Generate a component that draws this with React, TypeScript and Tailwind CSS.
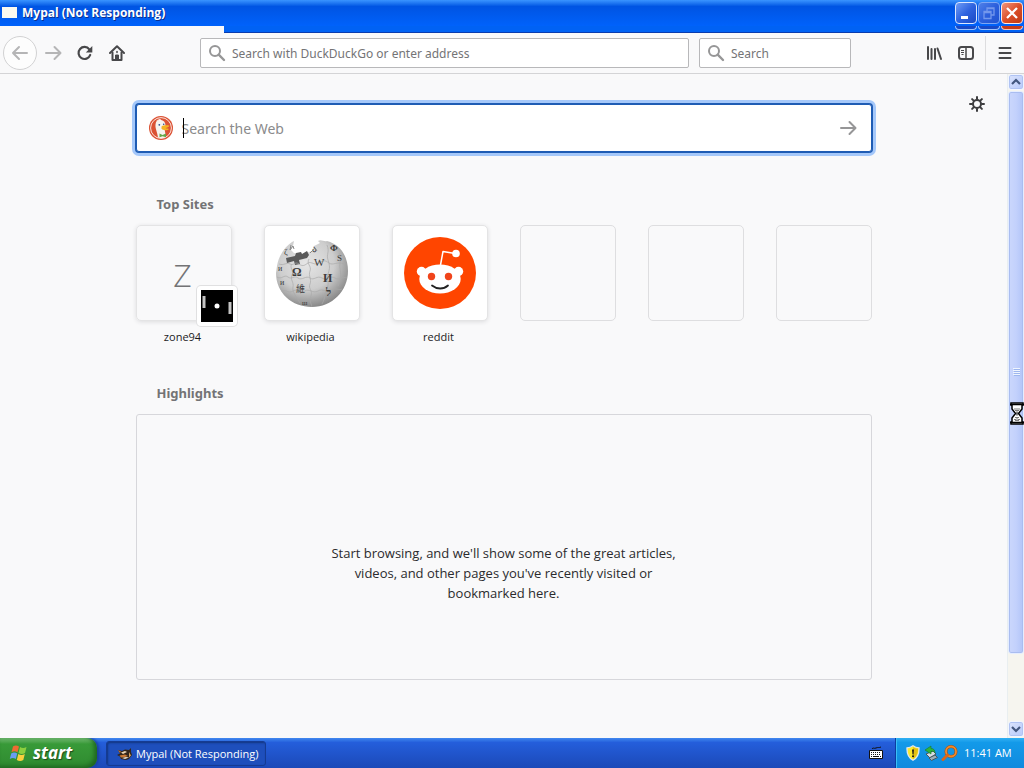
import type { ReactNode } from 'react';

const ui = "font-['Noto_Sans','Open_Sans',sans-serif]";

function WindowButton({ label, tone, children }: { label: string; tone: 'blue' | 'dim' | 'red'; children: ReactNode }) {
  const tones = {
    blue: 'bg-linear-to-br from-[#6f9bf5] via-[#2f63df] to-[#1b49c4] border-[#dbe7ff]',
    dim: 'bg-linear-to-br from-[#4f7fe8] via-[#2c5fdc] to-[#2153d0] border-[#7ea6f3]',
    red: 'bg-linear-to-br from-[#f0937a] via-[#dc4f28] to-[#c03a14] border-[#ffe9e2]',
  };
  const edges = {
    blue: 'border-[#9cc0fb] bg-[#1748c6]',
    dim: 'border-[#9cc0fb] bg-[#1748c6]',
    red: 'border-[#f3c3bd] bg-[#c43b1b]',
  };
  return (
    <div className="w-[22px]">
      <button aria-label={label} className={`flex h-[22px] w-full items-center justify-center rounded-[4px] border ${tones[tone]}`}>
        {children}
      </button>
      <div className={`mt-[2px] h-[4px] rounded-b-[4px] border border-t-0 ${edges[tone]}`} />
    </div>
  );
}

function TitleBar() {
  return (
    <header className="relative h-[33px] shrink-0 bg-[#0058f0]">
      <div className="flex h-[26px] items-center bg-linear-to-b from-[#3a94ff] via-[#0054e3] via-25% to-[#0062fb]">
        <span className="mb-[2px] ml-[2px] h-[11px] w-[15px] bg-[#fbfaf0]" />
        <h1 className="ml-[5px] font-['Open_Sans','Noto_Sans',sans-serif] text-[12px] leading-[16px] font-bold text-white [text-shadow:1px_1px_0_#0b2f8f]">
          Mypal (Not Responding)
        </h1>
      </div>
      <div className="flex h-[7px]">
        <div className="w-[224px] bg-[#f9f9fa]" />
        <div className="flex-1 border-b border-[#0a3cae] bg-[#0062f4]" />
      </div>
      <div className="absolute top-[2px] right-px flex gap-px">
        <WindowButton label="Minimize" tone="blue">
          <svg width="16" height="16" viewBox="0 0 16 16"><path d="M3 11h7v3H3z" fill="#fff" /></svg>
        </WindowButton>
        <WindowButton label="Restore" tone="dim">
          <svg width="16" height="16" viewBox="0 0 16 16" fill="none" stroke="#7397ec" strokeWidth="1.300">
            <path d="M6 6V3h7v7h-3M6 3.700h7" />
            <path d="M3 6.500h7v7H3zM3 7.500h7" />
          </svg>
        </WindowButton>
        <WindowButton label="Close" tone="red">
          <svg width="16" height="16" viewBox="0 0 16 16"><path d="M3 3l10 10M13 3L3 13" stroke="#fff" strokeWidth="2.300" /></svg>
        </WindowButton>
      </div>
    </header>
  );
}

function Magnifier() {
  return (
    <svg width="18" height="18" viewBox="0 0 18 18" fill="none" stroke="#969697" strokeWidth="2" className="shrink-0">
      <circle cx="7" cy="7" r="5" />
      <path d="M10.700 10.700L16 16" strokeWidth="2.400" strokeLinecap="round" />
    </svg>
  );
}

function Toolbar() {
  const field = 'flex h-[30px] items-center gap-[6px] rounded-[2px] border border-[#b8b8ba] bg-white pl-[7px]';
  const input = 'w-full min-w-0 bg-transparent pt-px text-[12px] leading-[18px] text-[#444] outline-none placeholder:text-[#747476]';
  return (
    <nav className="flex h-[41px] shrink-0 items-center border-b border-[#d4d4d6] bg-[#f9f9fa]">
      <button aria-label="Back" className="ml-[3px] flex h-[34px] w-[34px] shrink-0 items-center justify-center rounded-full border border-[#d2d2d3] bg-[#fdfdfd]">
        <svg width="18" height="16" viewBox="0 0 18 16" fill="none" stroke="#b5b5b6" strokeWidth="2" strokeLinecap="round" strokeLinejoin="round">
          <path d="M16 8H2M8 2L2 8l6 6" />
        </svg>
      </button>
      <button aria-label="Forward" className="ml-[8px] shrink-0">
        <svg width="17" height="16" viewBox="0 0 17 16" fill="none" stroke="#b5b5b6" strokeWidth="2" strokeLinecap="round" strokeLinejoin="round">
          <path d="M1 8h14M9.500 2l6 6-6 6" />
        </svg>
      </button>
      <button aria-label="Reload" className="ml-[15px] shrink-0">
        <svg width="16" height="16" viewBox="0 0 16 16" fill="none">
          <path d="M13.200 10A6 6 0 1 1 12.300 4.300" stroke="#48484a" strokeWidth="2.200" strokeLinecap="round" />
          <path d="M15.300 1v6.500H8.800z" fill="#48484a" />
        </svg>
      </button>
      <button aria-label="Home" className="ml-[16px] shrink-0">
        <svg width="16" height="16" viewBox="0 0 16 16" fill="none" stroke="#48484a" strokeWidth="2" strokeLinejoin="round" strokeLinecap="round">
          <path d="M1 8l7-6.800L15 8" />
          <path d="M3.500 7.500V15h9V7.500" />
          <path d="M6.500 15v-5h3v5z" fill="#48484a" strokeWidth="1" />
          <path d="M8 6.500v1" strokeWidth="1.500" />
        </svg>
      </button>
      <label className={`${field} ml-[75px] flex-1`}>
        <Magnifier />
        <input aria-label="Address" placeholder="Search with DuckDuckGo or enter address" className={input} />
      </label>
      <label className={`${field} ml-[10px] w-[152px]`}>
        <Magnifier />
        <input aria-label="Search" placeholder="Search" className={input} />
      </label>
      <button aria-label="Library" className="ml-[75px] shrink-0">
        <svg width="16" height="16" viewBox="0 0 16 16" stroke="#48484a" strokeWidth="2" strokeLinecap="round">
          <path d="M2 2v12M5.500 4v10M9 4v10M11.500 3.500L15 14" />
        </svg>
      </button>
      <button aria-label="Sidebar" className="ml-[16px] shrink-0">
        <svg width="16" height="16" viewBox="0 0 16 16" fill="none" stroke="#48484a" strokeWidth="2">
          <rect x="1" y="2" width="14" height="12" rx="2.500" />
          <path d="M8 2v12" strokeWidth="1.500" />
          <path d="M3 5.500h3M3 7.500h3M3.500 9.500h2" strokeWidth="1" />
        </svg>
      </button>
      <span className="ml-[11px] h-[34px] w-px bg-[#dddddf]" />
      <button aria-label="Menu" className="mr-[11px] ml-[11px] shrink-0">
        <svg width="16" height="16" viewBox="0 0 16 16" stroke="#48484a" strokeWidth="2" strokeLinecap="round">
          <path d="M2.500 3h11M2.500 8h11M2.500 13h11" />
        </svg>
      </button>
    </nav>
  );
}

function DuckLogo() {
  return (
    <svg width="26" height="26" viewBox="0 0 26 26" className="shrink-0">
      <circle cx="13" cy="13" r="12" fill="#db5234" />
      <circle cx="13" cy="13" r="10.400" fill="none" stroke="#fbe3dc" strokeWidth="1" />
      <path d="M10 22.500C9.500 18 7 13 7.500 9.500 7.800 6 9.500 4.500 12.500 5c3 .2 5 2 5 5.500 0 2-1 4-.5 6l1 5.500c-2.500 1.500-5.500 1.500-8 .5z" fill="#f6f3ee" />
      <path d="M8 5.500l4-1.500 2 1.500z" fill="#fff" />
      <path d="M13.500 11.500c2-1.500 6-1.300 8-.8-.5 1.300-2.500 1.800-4 2.300 1.500.8 3 .5 3.500 1-1 1.800-6 1.500-7.500-.3z" fill="#f4b323" />
      <path d="M11.500 18.500l3 1.500 3.500-1.500v3.800l-3.500-1-3 1z" fill="#65a847" />
      <circle cx="11.300" cy="9.800" r=".9" fill="#2d4f8e" />
      <circle cx="15.700" cy="9.200" r=".8" fill="#2d4f8e" />
    </svg>
  );
}

function WikipediaLogo() {
  return (
    <svg width="76" height="76" viewBox="0 0 76 76" className="font-['Liberation_Serif','Noto_Sans_CJK_SC',serif]">
      <defs>
        <radialGradient id="globe" cx="42%" cy="35%" r="65%">
          <stop offset="0" stopColor="#e6e6e6" />
          <stop offset=".6" stopColor="#cdcdcd" />
          <stop offset="1" stopColor="#8a8a8a" />
        </radialGradient>
      </defs>
      <path d="M3 31C5 19 12 11 18 7l2-1-1 5-2 4 3 3 8 1 10-3 2-5 6-3-2-2c3-2 6 1 9 0 15 4 21 17 21 30 0 20-16 36-36 36S2 58 2 38z" fill="url(#globe)" />
      <path d="M12 23l9-2 1-3 5-1 1 2 5-3 2 4-2 3-8 2 1 4-5 1-1-4-7 2z" fill="#5a5a5a" />
      <g fill="none" stroke="#a9a9a9" strokeWidth=".7">
        <path d="M5 29c5 2 7-2 11 0s5-3 9 0 6 1 9-1 7 3 11 0 6-3 10 0 8-2 15 1" />
        <path d="M3 42c5 3 7-3 11 0s6-2 10 1 8-3 12 0 7-3 12 0 8-3 13 0 7-2 12 0" />
        <path d="M7 56c6-2 7 3 12 0s8 3 12 0 8 3 13 0 8 2 13-1 8 1 11-1" />
        <path d="M18 29c-3 4 2 6 0 11s2 7 1 12 3 9 7 16M35 24c-3 5 3 7 1 12s2 8 0 13 3 6 1 12 0 6 1 11M53 10c3 7-1 9 1 15s2 8 0 14 2 8-1 14-1 9-5 16M65 18c3 7 0 9 1 15s1 10-2 18" />
      </g>
      <g fill="#3c3c3c">
        <text x="18" y="41" fontSize="12" fontWeight="bold">Ω</text>
        <text x="40" y="31" fontSize="11">W</text>
        <text x="49" y="47" fontSize="12" fontWeight="bold">И</text>
        <text x="22" y="57" fontSize="9">維</text>
        <text x="52" y="61" fontSize="11" fontWeight="bold">ל</text>
        <text x="63" y="26" fontSize="9">S</text>
        <text x="56" y="16" fontSize="9" fontWeight="bold">Ф</text>
        <text x="4" y="36" fontSize="8">и</text>
        <text x="6" y="50" fontSize="8">и</text>
        <text x="10" y="20" fontSize="9">ζ</text>
        <text x="38" y="17" fontSize="9">ა</text>
        <text x="28" y="70" fontSize="7">ш</text>
      </g>
      <path d="M17 10l-1 5 3-4 1 3M36 18l5-5 2 3" stroke="#888" strokeWidth="1" fill="none" />
    </svg>
  );
}

function RedditLogo() {
  return (
    <svg width="72" height="72" viewBox="0 0 72 72">
      <circle cx="36" cy="36" r="36" fill="#ff4500" />
      <path d="M36.500 28l2.500-13.500L51 16.500" fill="none" stroke="#fff" strokeWidth="1.500" strokeLinejoin="round" />
      <circle cx="52" cy="16.500" r="3.800" fill="#fff" />
      <circle cx="17.500" cy="34.500" r="4.700" fill="#fff" />
      <circle cx="54.500" cy="34.500" r="4.700" fill="#fff" />
      <ellipse cx="36" cy="42" rx="20.700" ry="14.500" fill="#fff" />
      <circle cx="27.500" cy="39.500" r="3.700" fill="#f0441b" />
      <circle cx="44.500" cy="39.500" r="3.700" fill="#f0441b" />
      <path d="M28 48.500c5 4 11.500 4 16 0" fill="none" stroke="#222" strokeWidth="1.800" strokeLinecap="round" />
    </svg>
  );
}

function PongIcon() {
  return (
    <svg width="32" height="32" viewBox="0 0 32 32">
      <rect width="32" height="32" fill="#000" />
      <path d="M1.500 6h3v12h-3zM27.500 12h3v12h-3z" fill="#c4c4c4" />
      <circle cx="16" cy="16" r="2.500" fill="#fff" />
    </svg>
  );
}

function Site({ name, children }: { name: string; children: ReactNode }) {
  return (
    <li className="w-[96px]">
      <a href="#" className="block text-center font-['Open_Sans','Noto_Sans',sans-serif] text-[11px] leading-[20px] text-[#1c1c1e]">
        {children}
        <span className="mt-[6px] block pr-[2px]">{name}</span>
      </a>
    </li>
  );
}

const tile = 'relative flex h-[96px] items-center justify-center rounded-[5px] border border-[#e4e4e5] shadow-[0_1px_4px_#dcdcde]';

function NewTab() {
  return (
    <main className="relative min-w-0 flex-1 bg-[#f9f9fa] px-8 pt-[30px]">
      <button aria-label="Settings" className="absolute top-[22px] right-[22px]">
        <svg width="16" height="16" viewBox="0 0 16 16" fill="none" stroke="#3d3d3f" strokeWidth="2" strokeLinecap="round">
          <circle cx="8" cy="8" r="4" />
          <path d="M8 1v2M8 13v2M1 8h2M13 8h2M3.100 3.100l1.300 1.300M11.600 11.600l1.300 1.300M3.100 12.900l1.300-1.300M11.600 4.400l1.300-1.300" />
        </svg>
      </button>
      <div className="mx-auto max-w-[736px]">
        <form className="flex h-[48px] items-center rounded-[3px] border border-[#1f5cb4] bg-white pl-[11px] shadow-[0_0_0_1px_#1f5cb4,0_0_0_4px_#a5c8fa]">
          <DuckLogo />
          <div className="relative ml-[8px] flex-1">
            <input aria-label="Search the Web" placeholder="Search the Web" className="block w-full bg-transparent pt-px text-[14px] leading-[20px] outline-none placeholder:text-[#8b8b8c]" />
            <span className="absolute top-0 left-px h-[20px] w-px bg-black" />
          </div>
          <button type="button" aria-label="Search" className="mr-[14px]">
            <svg width="18" height="16" viewBox="0 0 18 16" fill="none" stroke="#969697" strokeWidth="2" strokeLinecap="round" strokeLinejoin="round">
              <path d="M2 8h14M10.500 2l6 6-6 6" />
            </svg>
          </button>
        </form>

        <h2 className="mt-[42px] pl-[21px] text-[13px] leading-[20px] font-bold text-[#737375]">Top Sites</h2>
        <ul className="mt-[11px] flex gap-8">
          <Site name="zone94">
            <span className={tile}>
              <span className="pt-[4px] pr-[2px] text-[32px] leading-[40px] font-light text-[#737375]">Z</span>
              <span className="absolute right-[-6px] bottom-[-6px] rounded-[4px] bg-white p-[4px] shadow-[0_0_0_1px_#e0e0e1]"><PongIcon /></span>
            </span>
          </Site>
          <Site name="wikipedia"><span className={`${tile} bg-white`}><WikipediaLogo /></span></Site>
          <Site name="reddit"><span className={`${tile} bg-white`}><RedditLogo /></span></Site>
          {[0, 1, 2].map((n) => (
            <li key={n} className="h-[96px] w-[96px] rounded-[5px] border border-[#dedee0]" />
          ))}
        </ul>

        <h2 className="mt-[36px] pl-[21px] text-[13px] leading-[20px] font-bold text-[#737375]">Highlights</h2>
        <section className="mt-[11px] h-[266px] rounded-[3px] border border-[#d7d7db] pt-[128px]">
          <p className="mx-auto max-w-[352px] text-center font-['Open_Sans','Noto_Sans',sans-serif] text-[13px] leading-[20px] text-[#2b2b2d]">
            Start browsing, and we'll show some of the great articles, videos, and other pages you've recently visited or bookmarked here.
          </p>
        </section>
      </div>
    </main>
  );
}

function ScrollArrow({ label, d }: { label: string; d: string }) {
  return (
    <button aria-label={label} className="flex h-[16px] w-full shrink-0 items-center justify-center rounded-[3px] border border-[#f2f6ff] bg-linear-to-br from-[#dbe4fd] to-[#b7c9fa] shadow-[inset_0_0_0_1px_#b0c3f3]">
      <svg width="10" height="8" viewBox="0 0 10 8" fill="none" stroke="#43577f" strokeWidth="2.200"><path d={d} /></svg>
    </button>
  );
}

function Hourglass() {
  return (
    <svg width="14" height="23" viewBox="0 0 14 23" className="absolute top-[328px] right-0">
      <path d="M1 1h12v2h-1v4L8.500 11.500 12 16v4h1v2H1v-2h1v-4l3.500-4.500L2 7V3H1z" fill="#fff" stroke="#000" strokeWidth="1.500" />
      <path d="M0 2.500h14M0 20.500h14" stroke="#000" strokeWidth="1.300" />
      <path d="M4.500 6.500h1v1h-1zM6.500 6.500h1v1h-1zM8.500 6.500h1v1h-1zM5.500 8h1v1h-1zM7.500 8h1v1h-1zM6.500 9.500h1v4h-1zM5.500 15h1v1h-1zM7.500 15h1v1h-1zM4.500 17h1v1h-1zM6.500 16.500h1v1h-1zM8.500 17h1v1h-1zM5.500 18h1v1h-1zM7.500 18h1v1h-1z" fill="#000" />
    </svg>
  );
}

function ScrollBar() {
  return (
    <aside className="relative flex w-[17px] shrink-0 flex-col border-l border-[#e9eef0] bg-[#f6f5ef] pb-px">
      <ScrollArrow label="Scroll up" d="M1 6l4-4 4 4" />
      <div className="mt-px flex min-h-0 flex-1 flex-col">
        <div className="flex h-[89.3%] items-center justify-center rounded-[3px] border border-[#e5edff] bg-linear-to-r from-[#cbd7fc] via-[#c3d1fc] to-[#b3c5f8] shadow-[inset_0_0_0_1px_#aabdf0]">
          <svg width="7" height="8" viewBox="0 0 7 8" stroke="#eef4fe"><path d="M0 .5h7M0 2.500h7M0 4.500h7M0 6.500h7" /><path d="M1 1.500h6M1 3.500h6M1 5.500h6M1 7.500h6" stroke="#9db6ee" /></svg>
        </div>
      </div>
      <ScrollArrow label="Scroll down" d="M1 2l4 4 4-4" />
      <Hourglass />
    </aside>
  );
}

function WindowsFlag() {
  return (
    <svg width="20" height="20" viewBox="0 0 20 20" className="shrink-0">
      <path d="M4 3.500c2-1.400 4-1.300 6 0L8.500 9.300c-2-1.300-4-1.400-6 0z" fill="#ee6b33" />
      <path d="M11 4c2 1.300 4.200 1.300 6.500 0L16 10c-2 1.300-4.300 1.300-6.500 0z" fill="#8ccf3f" />
      <path d="M2.200 10.500c2-1.400 4-1.300 6 0L6.800 16c-2-1.300-4-1.300-6 0z" fill="#6a9df2" />
      <path d="M9.300 11c2 1.300 4.200 1.300 6.500 0l-1.500 6c-2 1.300-4.300 1.300-6.500 0z" fill="#f9cf3d" />
    </svg>
  );
}

function RaccoonIcon() {
  return (
    <svg width="16" height="16" viewBox="0 0 16 16" className="shrink-0">
      <path d="M1 4l4 1 3-1.500L12 4l2-2v4l1 3-3 4-3 1-5-1-1-2.500L0 9l3-1.500z" fill="#33261b" />
      <path d="M4 6.500l4-1.500 2 1-4 2z" fill="#ead6b4" />
      <path d="M12 6l2 3.500-2 2z" fill="#d9a866" />
      <path d="M1 4l3 1.500L3 7zM2.500 9.500L8 8.500l3 1.500-3 1-4 .5z" fill="#c87833" />
      <path d="M5 12l4-1 3 .5-4 1.500z" fill="#e8dccb" />
    </svg>
  );
}

function Taskbar() {
  return (
    <footer className="flex h-[30px] shrink-0 bg-linear-to-b from-[#4288ef] via-[#245edb] via-15% to-[#1c49b8] font-['Open_Sans','Noto_Sans',sans-serif] text-[11px] leading-[16px] text-white">
      <button className="flex w-[97px] shrink-0 items-center rounded-r-[10px] bg-linear-to-b from-[#70b970] via-[#389a38] via-20% to-[#2f8a30] pl-[9px] shadow-[inset_-3px_-2px_4px_#1f6720,2px_0_3px_#1a3f9b]">
        <WindowsFlag />
        <span className="ml-[4px] text-[17px] leading-[24px] font-bold italic [text-shadow:1px_1px_1px_#1c4a1c]">start</span>
      </button>
      <button className="mt-[3px] ml-[9px] flex h-[25px] w-[160px] items-center gap-[3px] rounded-[3px] border border-[#153b92] bg-[#1e4fbc] pl-[10px] shadow-[inset_1px_1px_2px_#123680]">
        <RaccoonIcon />
        <span>Mypal (Not Responding)</span>
      </button>
      <div className="flex flex-1 items-center justify-end pr-[12px]">
        <svg width="14" height="14" viewBox="0 0 14 14">
          <path d="M3 3c1-2 2 0 4-1s3 0 5-1" stroke="#111" fill="none" />
          <path d="M.5 4.500h13v8H.5z" fill="#fff" stroke="#111" />
          <path d="M2 6.500h10M2 8.500h10" stroke="#111" strokeDasharray="1 1" />
          <path d="M2 10.500h1M4 10.500h6M11 10.500h1" stroke="#111" />
        </svg>
      </div>
      <div className="flex w-[129px] shrink-0 items-center border-l border-[#0c3d9f] bg-linear-to-b from-[#2fb0f3] via-[#139ae9] via-15% to-[#108ade] pl-[9px] shadow-[inset_1px_0_0_#3bc0f7]">
        <svg width="16" height="16" viewBox="0 0 16 16">
          <path d="M8 .8c2 1.500 4 2 6 2 .3 6-1.500 10-6 12.500C3.500 12.800 1.700 8.800 2 2.800c2 0 4-.5 6-2z" fill="#fbe92c" stroke="#dfe5ee" strokeWidth="1.300" />
          <path d="M8 2v12c3-2 5-5 5-10.500C11 3.500 9.500 3 8 2z" fill="#e2c013" />
          <path d="M7.100 4.500h1.800L8.500 9.500h-1z" fill="#111" /><circle cx="8" cy="11.300" r="1" fill="#111" />
        </svg>
        <svg width="16" height="16" viewBox="0 0 16 16" className="ml-[2px]">
          <path d="M3 9l7-3 3 3-6 4z" fill="#d6dde2" stroke="#44565e" />
          <path d="M6 13l6-3 2.500 2.500-6 3z" fill="#9caeb8" stroke="#44565e" />
          <path d="M2 5l6-4v2.500c3 0 4 2 4 4.500-1-1.500-2-2-4-1.500V9z" fill="#2fb43c" stroke="#187a26" strokeWidth=".6" />
        </svg>
        <svg width="17" height="16" viewBox="0 0 17 16" className="ml-[2px]" fill="none">
          <circle cx="10" cy="6.500" r="5" stroke="#a9500f" strokeWidth="3" />
          <circle cx="10" cy="6.500" r="5" stroke="#f08a2c" strokeWidth="1.800" />
          <path d="M6.500 10L2 14.500" stroke="#d9661a" strokeWidth="3" strokeLinecap="round" />
        </svg>
        <time className="ml-[6px] whitespace-nowrap">11:41 AM</time>
      </div>
    </footer>
  );
}

export default function App() {
  return (
    <div className={`flex h-screen min-h-[740px] flex-col overflow-hidden bg-[#f9f9fa] ${ui}`}>
      <TitleBar />
      <Toolbar />
      <div className="flex min-h-0 flex-1">
        <NewTab />
        <ScrollBar />
      </div>
      <Taskbar />
    </div>
  );
}
